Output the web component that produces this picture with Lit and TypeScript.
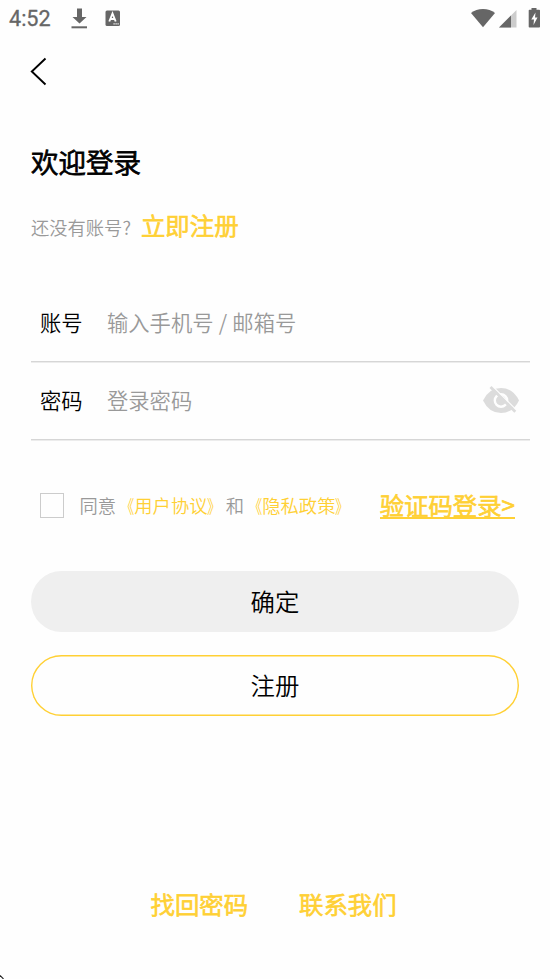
import { LitElement, html, css } from "lit";
import { customElement } from "lit/decorators.js";

@customElement("status-bar")
class StatusBar extends LitElement {
  static styles = css`
    :host {
      display: flex;
      align-items: center;
      height: 38px;
      padding: 0 9px;
      box-sizing: border-box;
      color: #666;
    }
    .time {
      font: 400 21.6px/40px Roboto, sans-serif;
      width: 62px;
      white-space: nowrap;
      -webkit-text-stroke: 0.3px #666;
    }
    .grow { flex: 1; }
    svg { display: block; }
  `;
  render() {
    return html`
      <span class="time">4:52</span>
      <svg width="52" height="38" fill="#666">
        <path d="M6 8.500h5v8.500h4.500L8.500 23.500 1.500 17H6z" />
        <path d="M.500 26.300h15.500v2H.500z" />
        <rect x="34.500" y="10.500" width="14.500" height="15.500" rx="1.500" />
        <path d="M38.300 21.500L41.500 13.500L44.700 21.500M39.300 19h4.400" fill="none" stroke="#fff" stroke-width="1.900" />
        <path d="M42.500 23.900h1.200M44.500 23.900h1.200M46.500 23.900h1.200" stroke="#fff" stroke-width="1.100" />
      </svg>
      <span class="grow"></span>
      <svg width="71" height="38" fill="#666">
        <path d="M1 13Q6 9 13 9T25 13L13 27.200z" />
        <path d="M46.500 10v17.500H29z" fill="#ccc" />
        <path d="M41 15.500v12H29z" />
        <path d="M61.500 8h5v1.700h2.700q.800 0 .800.800v16.200q0 .800-.800.800h-9.700q-.800 0-.800-.800V10.500q0-.800.800-.800h2z" />
        <path d="M65.500 12.500L61.300 19.500H64L63.500 25L67.500 17.500H65z" fill="#fff" />
      </svg>
    `;
  }
}

@customElement("form-row")
class FormRow extends LitElement {
  static properties = { label: {}, hint: {} };
  declare label: string;
  declare hint: string;
  static styles = css`
    :host {
      display: flex;
      align-items: center;
      height: 78px;
      box-sizing: border-box;
      padding: 0 11px 2px 9px;
      border-bottom: 1px solid #d6d6d6;
      box-shadow: 0 1px 0 #ececec;
      font-size: 21.3px;
      line-height: 32px;
    }
    .label { width: 67px; color: #000; }
    .hint { flex: 1; color: #999; word-spacing: 0.5px; }
  `;
  render() {
    return html`<span class="label">${this.label}</span
      ><span class="hint">${this.hint}</span><slot></slot>`;
  }
}

@customElement("app-root")
class AppRoot extends LitElement {
  static styles = css`
    :host {
      display: block;
      position: relative;
      width: 550px;
      height: 979px;
      overflow: hidden;
      background: #fefefe;
      font-family: "Noto Sans CJK SC", sans-serif;
      font-weight: 350;
      color: #000;
      white-space: nowrap;
    }
    svg { display: block; }
    .nav { height: 66px; padding-left: 30px; }
    .title {
      margin: 37px 0 0 31px;
      font-size: 27.5px;
      line-height: 40px;
      -webkit-text-stroke: 0.8px currentColor;
    }
    .strong {
      font-size: 24.4px;
      color: #ffd034;
      -webkit-text-stroke: 0.75px currentColor;
    }
    .sub {
      display: flex;
      align-items: baseline;
      gap: 10px;
      margin: 26px 0 0 31px;
      height: 40px;
      line-height: 36px;
      font-size: 18.3px;
      color: #999;
    }
    .form { margin: 37px 20px 0 31px; }
    .agree {
      display: flex;
      align-items: center;
      height: 40px;
      margin: 45px 35px 0 40px;
      font-size: 18.3px;
      color: #999;
    }
    .box {
      width: 24px;
      height: 25px;
      box-sizing: border-box;
      border: 1px solid #ccc;
      margin-right: 15.500px;
    }
    .link { color: #ffd034; }
    .open, .close { display: inline-block; transform: scaleX(0.75); }
    .open { transform-origin: right; }
    .close { transform-origin: left; }
    .code {
      margin-left: auto;
      padding-top: 1px;
      border-bottom: 2px solid #ffd034;
      line-height: 25px;
    }
    .buttons {
      display: flex;
      flex-direction: column;
      gap: 23px;
      margin: 46px 31px 0;
    }
    .btn {
      height: 61px;
      border-radius: 31px;
      background: #efefef;
      font-size: 24.4px;
      line-height: 59px;
      text-align: center;
    }
    .outline { background: #fefefe; box-shadow: inset 0 0 0 1.400px #ffd034; }
    .foot {
      display: flex;
      gap: 51px;
      margin: 168px 0 0 150.500px;
      line-height: 40px;
    }
    .corner { position: absolute; left: 0; bottom: 0; }
  `;
  private policy(name: string) {
    return html`<span class="link"><span class="open">《</span>${name}<span class="close">》</span></span>`;
  }
  render() {
    return html`
      <status-bar></status-bar>
      <div class="nav">
        <svg width="20" height="50" fill="none" stroke="#000" stroke-width="1.900">
          <path d="M15.500 20.500L1.800 33.500L15.500 46.500" />
        </svg>
      </div>
      <div class="title">欢迎登录</div>
      <div class="sub"><span>还没有账号?</span><span class="strong">立即注册</span></div>
      <div class="form">
        <form-row label="账号" hint="输入手机号 / 邮箱号"></form-row>
        <form-row label="密码" hint="登录密码">
          <svg width="36" height="28" viewBox="483 386 36 28">
            <path d="M483 400.500Q489 388 501 388T519 400.500Q513 413 501 413T483 400.500z" fill="#dcdcdc" />
            <circle cx="501" cy="400.500" r="6.200" fill="none" stroke="#fefefe" stroke-width="2.400" />
            <path d="M492.300 386L517 410.700" stroke="#fefefe" stroke-width="1.200" />
            <path d="M490.500 387L515.300 411.800" stroke="#dcdcdc" stroke-width="2.800" />
          </svg>
        </form-row>
      </div>
      <div class="agree">
        <span class="box"></span>
        <span>同意${this.policy("用户协议")}和${this.policy("隐私政策")}</span>
        <span class="strong code">验证码登录&gt;</span>
      </div>
      <div class="buttons">
        <div class="btn">确定</div>
        <div class="btn outline">注册</div>
      </div>
      <div class="foot strong"><span>找回密码</span><span>联系我们</span></div>
      <svg class="corner" width="4" height="4"><path d="M0 .500L3.500 4" stroke="#222" stroke-width="1.100" /></svg>
    `;
  }
}
